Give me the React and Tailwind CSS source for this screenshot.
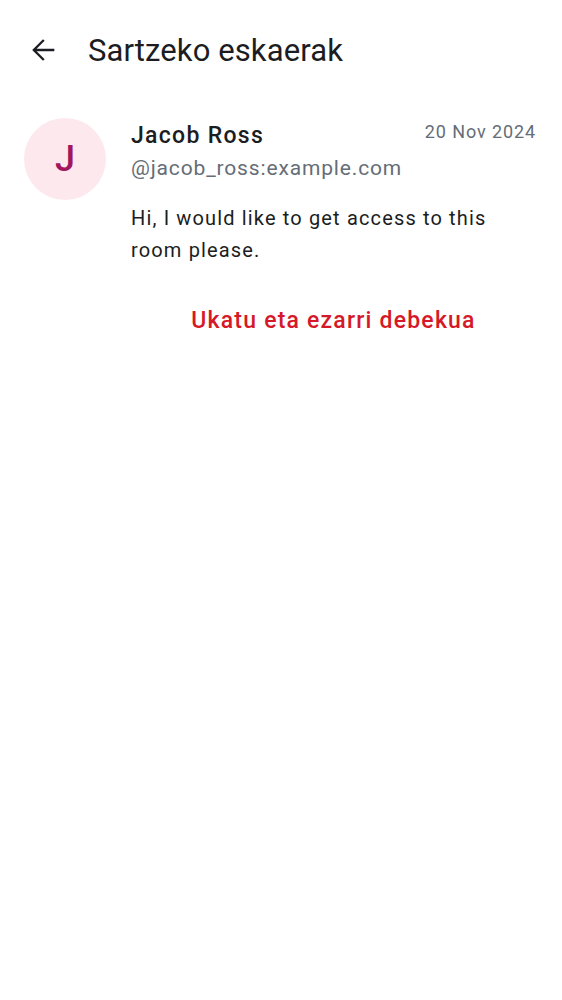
export default function App() {
  return (
    <div className="min-h-screen bg-white font-['Roboto',sans-serif] text-[#1b1d22]">
      {/* top bar */}
      <header className="flex items-center h-[100px] pl-[26px]">
        <svg viewBox="0 0 24 24" className="w-[34px] h-[34px] fill-[#1b1d22]">
          <path d="M20 11.15H7.5l5.65-5.65L12 4.35 4.35 12 12 19.65l1.15-1.15-5.65-5.65H20v-1.7z" />
        </svg>
        <h1 className="ml-[28px] text-[31px] leading-none tracking-[0.1px]">Sartzeko eskaerak</h1>
      </header>

      {/* request */}
      <div className="flex pl-[24px] pr-[26px] pt-[18px]">
        <div className="w-[82px] h-[82px] rounded-full bg-[#fde8ee] flex items-center justify-center shrink-0">
          <span className="text-[#a3155c] text-[36px] font-medium leading-none">J</span>
        </div>
        <div className="ml-[25px] flex-1">
          <div className="flex items-start justify-between pt-[1px]">
            <span className="text-[23px] font-medium leading-[34px] tracking-[1.3px]">Jacob Ross</span>
            <span className="-mt-[1px] text-[18px] text-[#656d77] leading-[28px] tracking-[0.9px]">20 Nov 2024</span>
          </div>
          <div className="text-[21px] text-[#656d77] leading-[30px] tracking-[0.85px]">@jacob_ross:example.com</div>
          <p className="mt-[19px] text-[20px] leading-[32px] tracking-[1.15px]">
            Hi, I would like to get access to this room please.
          </p>
          <button className="mt-[31px] w-full text-center text-[23px] font-medium text-[#d51928] leading-[48px] tracking-[1.2px]">
            Ukatu eta ezarri debekua
          </button>
        </div>
      </div>
    </div>
  );
}
